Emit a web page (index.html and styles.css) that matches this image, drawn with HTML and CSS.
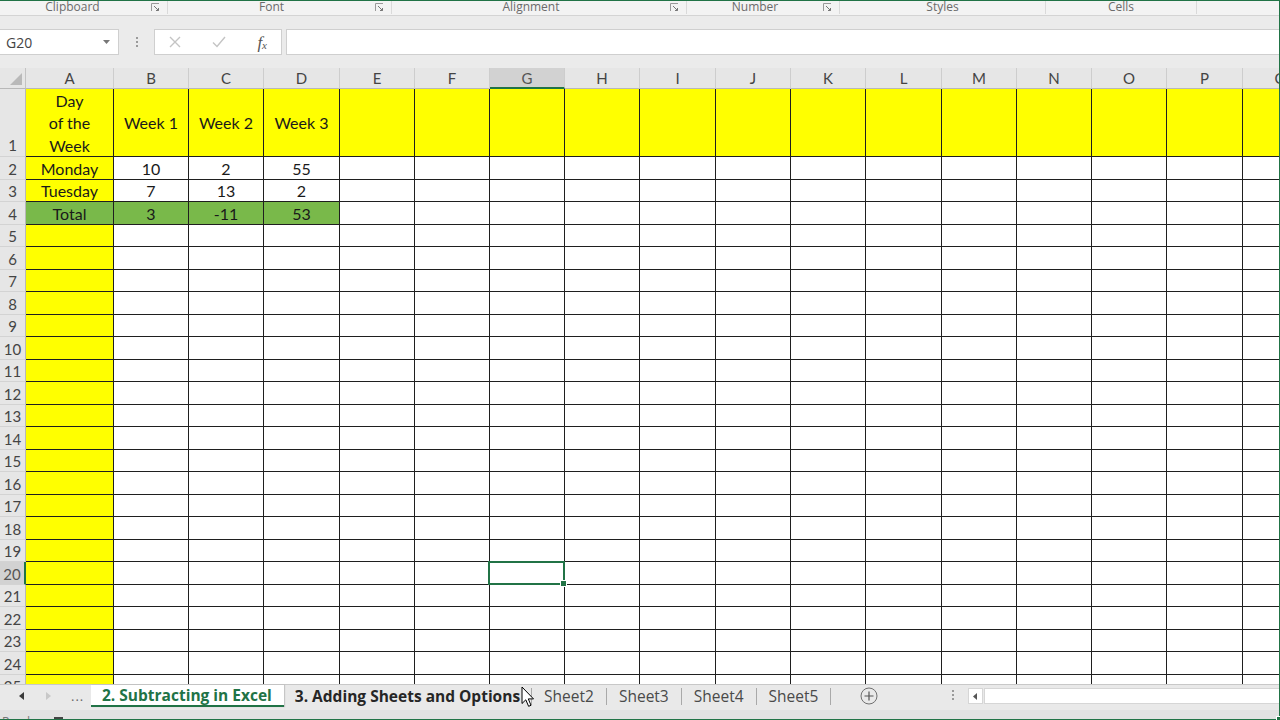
FILE: index.html
```html
<!DOCTYPE html>
<html lang="en">
<head>
    <meta charset="UTF-8">
    <meta name="viewport" content="width=device-width, initial-scale=1.0">
    <title>2. Subtracting in Excel</title>
    <link rel="stylesheet" href="styles.css">
</head>
<body>
    <!-- ribbon group captions -->
    <div class="ribbon">
        <div class="group g-clipboard"><span class="group-label">Clipboard</span><svg class="launcher" width="9" height="9" viewBox="0 0 9 9"><path d="M0.5 8V0.5H8" fill="none" stroke="#9a9a9a"/><path d="M3 3L7.5 7.5M5 7.5H7.5V5" fill="none" stroke="#777"/></svg></div>
        <div class="group g-font"><span class="group-label">Font</span><svg class="launcher" width="9" height="9" viewBox="0 0 9 9"><path d="M0.5 8V0.5H8" fill="none" stroke="#9a9a9a"/><path d="M3 3L7.5 7.5M5 7.5H7.5V5" fill="none" stroke="#777"/></svg></div>
        <div class="group g-alignment"><span class="group-label">Alignment</span><svg class="launcher" width="9" height="9" viewBox="0 0 9 9"><path d="M0.5 8V0.5H8" fill="none" stroke="#9a9a9a"/><path d="M3 3L7.5 7.5M5 7.5H7.5V5" fill="none" stroke="#777"/></svg></div>
        <div class="group g-number"><span class="group-label">Number</span><svg class="launcher" width="9" height="9" viewBox="0 0 9 9"><path d="M0.5 8V0.5H8" fill="none" stroke="#9a9a9a"/><path d="M3 3L7.5 7.5M5 7.5H7.5V5" fill="none" stroke="#777"/></svg></div>
        <div class="group g-styles"><span class="group-label">Styles</span></div>
        <div class="group g-cells"><span class="group-label">Cells</span></div>
        <div class="group g-rest"></div>
    </div>

    <!-- name box + formula bar -->
    <div class="formula-bar">
        <div class="name-box">
            <span>G20</span>
            <svg class="caret" width="7" height="4" viewBox="0 0 7 4"><path d="M0 0H7L3.5 4Z" fill="#777"/></svg>
        </div>
        <div class="grip"><i></i><i></i><i></i></div>
        <div class="fx-buttons">
            <svg width="12" height="12" viewBox="0 0 12 12"><path d="M1 1L11 11M11 1L1 11" stroke="#c4c4c4" stroke-width="1.4"/></svg>
            <svg width="14" height="12" viewBox="0 0 14 12"><path d="M1 6.5L5 10.5L13 1" fill="none" stroke="#c4c4c4" stroke-width="1.4"/></svg>
            <span class="fx">f<sub>x</sub></span>
        </div>
        <div class="formula-input"></div>
    </div>

    <!-- worksheet grid, filled in by the script below -->
    <div class="sheet" id="sheet"></div>

    <!-- sheet tabs -->
    <div class="tabs">
        <div class="tab-nav">
            <svg width="6" height="8" viewBox="0 0 6 8"><path d="M5 0V8L0 4Z" fill="#3a3a3a"/></svg>
            <svg width="6" height="8" viewBox="0 0 6 8"><path d="M1 0V8L6 4Z" fill="#c8c8c8"/></svg>
            <span class="more">...</span>
        </div>
        <div class="tab active">2. Subtracting in Excel</div>
        <div class="tab bold">3. Adding Sheets and Options</div>
        <span class="tab-sep"></span>
        <div class="tab">Sheet2</div>
        <span class="tab-sep"></span>
        <div class="tab">Sheet3</div>
        <span class="tab-sep"></span>
        <div class="tab">Sheet4</div>
        <span class="tab-sep"></span>
        <div class="tab">Sheet5</div>
        <span class="tab-sep"></span>
        <div class="add-sheet">
            <svg width="18" height="18" viewBox="0 0 18 18"><circle cx="9" cy="9" r="8" fill="none" stroke="#707070"/><path d="M9 4.5V13.5M4.5 9H13.5" stroke="#555" stroke-width="1.2"/></svg>
        </div>
        <div class="grip tab-grip"><i></i><i></i><i></i></div>
        <div class="hscroll">
            <div class="scroll-btn"><svg width="4" height="7" viewBox="0 0 4 7"><path d="M4 0V7L0 3.5Z" fill="#555"/></svg></div>
            <div class="scroll-track"></div>
        </div>
    </div>

    <div class="status">
        <span class="status-text">Ready</span>
        <svg class="macro" width="14" height="10" viewBox="0 0 14 10"><rect x="0" y="1" width="9" height="9" fill="#444"/><rect x="10" y="3" width="4" height="7" fill="#444"/></svg>
    </div>

    <!-- mouse pointer resting over the tabs -->
    <svg class="pointer" width="14" height="22" viewBox="0 0 14 22"><path d="M1 1V17.5L4.8 13.8L7.6 20.3L10 19.3L7.3 12.9H12.5Z" fill="#fff" stroke="#000" stroke-width="1" stroke-linejoin="round"/></svg>

    <script>
        const letters = 'ABCDEFGHIJKLMNOPQ'.split('');
        const colWidths = [88, 75, 75, 76, 75, 75, 75, 75, 76, 75, 75, 76, 75, 75, 75, 76, 76];
        const rowCount = 25;
        const active = { col: 'G', row: 20 };

        // values typed into the sheet
        const data = {
            1: ['Day<br>of the<br>Week', 'Week 1', 'Week 2', 'Week 3'],
            2: ['Monday', '10', '2', '55'],
            3: ['Tuesday', '7', '13', '2'],
            4: ['Total', '3', '-11', '53']
        };

        const sheet = document.getElementById('sheet');

        // header row, tall first row, then rows alternating 23/22px
        const rowHeights = [21, 68];
        for (let r = 2; r <= rowCount; r++) {
            rowHeights.push(r % 2 === 0 ? 23 : 22);
        }
        sheet.style.gridTemplateColumns = '26px ' + colWidths.map(w => w + 'px').join(' ');
        sheet.style.gridTemplateRows = rowHeights.map(h => h + 'px').join(' ');

        let html = '<div class="corner"><svg width="12" height="12" viewBox="0 0 12 12"><path d="M12 0V12H0Z" fill="#b9b9b9"/></svg></div>';
        letters.forEach(l => {
            const cls = l === active.col ? 'col-head selected' : 'col-head';
            html += `<div class="${cls}">${l}</div>`;
        });

        for (let r = 1; r <= rowCount; r++) {
            const rowCls = r === active.row ? 'row-head selected' : 'row-head';
            html += `<div class="${rowCls}${r === 1 ? ' tall' : ''}">${r}</div>`;
            letters.forEach((l, c) => {
                let cls = 'cell';
                if (r === 4 && c <= 3) {
                    cls += ' green';
                } else if (r === 1 || c === 0) {
                    cls += ' yellow';
                }
                if (r === active.row && l === active.col) cls += ' active';
                const value = (data[r] && data[r][c]) || '';
                html += `<div class="${cls}">${value}</div>`;
            });
        }

        sheet.innerHTML = html;
    </script>
</body>
</html>
```

FILE: styles.css
```css
* {
    box-sizing: border-box;
}
html, body {
    margin: 0;
    padding: 0;
}
body {
    width: 1280px;
    height: 720px;
    overflow: hidden;
    position: relative;
    background-color: #ebebeb;
    font-family: "Open Sans", "Liberation Sans", sans-serif;
}

/* ribbon captions */
.ribbon {
    display: flex;
    height: 16px;
    background-color: #f3f3f3;
    border-bottom: 1px solid #d4d4d4;
}
.group {
    display: flex;
    align-items: center;
    height: 14px;
    border-right: 1px solid #dadada;
}
.group-label {
    flex: 1;
    text-align: center;
    font-size: 12px;
    line-height: 14px;
    color: #6b6b6b;
}
.launcher {
    margin-right: 7px;
}
.g-clipboard { width: 168px; }
.g-clipboard .group-label { padding-right: 6px; }
.g-font { width: 224px; }
.g-alignment { width: 295px; }
.g-number { width: 153px; }
.g-styles { width: 206px; }
.g-cells { width: 151px; }
.g-rest { flex: 1; border-right: none; }

/* formula bar */
.formula-bar {
    display: flex;
    align-items: center;
    height: 52px;
    background-color: #ebebeb;
}
.name-box {
    width: 119px;
    height: 26px;
    display: flex;
    align-items: center;
    justify-content: space-between;
    padding: 0 8px 0 6px;
    background-color: white;
    border: 1px solid #cfcfcf;
    border-left: none;
    font-size: 14px;
    color: #444;
}
.grip {
    width: 35px;
    display: flex;
    flex-direction: column;
    align-items: center;
    gap: 2px;
}
.grip i {
    width: 2px;
    height: 2px;
    background-color: #9a9a9a;
}
.fx-buttons {
    width: 128px;
    height: 26px;
    display: flex;
    align-items: center;
    justify-content: space-between;
    padding: 0 14px 0 14px;
    background-color: white;
    border: 1px solid #cfcfcf;
}
.fx {
    font-family: "Liberation Serif", serif;
    font-style: italic;
    font-size: 17px;
    color: #555;
    line-height: 1;
}
.fx sub {
    font-size: 11px;
    vertical-align: -1px;
}
.formula-input {
    flex: 1;
    height: 26px;
    margin-left: 4px;
    background-color: white;
    border: 1px solid #cfcfcf;
    border-right: none;
}

/* worksheet */
.sheet {
    display: grid;
    height: 616px;
    overflow: hidden;
    background-color: white;
}
.corner {
    display: flex;
    align-items: flex-end;
    justify-content: flex-end;
    padding: 0 3px 3px 0;
    background-color: #e6e6e6;
    border-right: 1px solid #c3c3c3;
    border-bottom: 1px solid #b8b8b8;
}
.col-head {
    display: flex;
    align-items: center;
    justify-content: center;
    background-color: #e6e6e6;
    border-right: 1px solid #cdcdcd;
    border-bottom: 1px solid #b8b8b8;
    font-family: "Lato", "Liberation Sans", sans-serif;
    font-size: 15px;
    color: #444;
}
.col-head.selected {
    background-color: #d2d2d2;
    border-bottom: 2px solid #217346;
    color: #555;
}
.row-head {
    display: flex;
    align-items: center;
    justify-content: center;
    padding-top: 1px;
    background-color: #e6e6e6;
    border-right: 1px solid #b8b8b8;
    border-bottom: 1px solid #d3d3d3;
    font-family: "Lato", "Liberation Sans", sans-serif;
    font-size: 15px;
    color: #444;
}
.row-head.tall {
    align-items: flex-end;
    padding-bottom: 2px;
}
.row-head.selected {
    background-color: #d2d2d2;
    border-right: 2px solid #217346;
    color: #555;
}
.cell {
    position: relative;
    display: flex;
    align-items: center;
    justify-content: center;
    text-align: center;
    padding-top: 2px;
    border-right: 1px solid #1f1f1f;
    border-bottom: 1px solid #1f1f1f;
    font-family: "Lato", "Liberation Sans", sans-serif;
    font-size: 16px;
    line-height: 22.5px;
    color: #1a1a1a;
}
.yellow {
    background-color: #ffff00;
}
.green {
    background-color: #79b94a;
}
.active::after {
    content: "";
    position: absolute;
    left: -2px;
    top: -1px;
    right: -1px;
    bottom: -1px;
    border: 2px solid #217346;
}
.active::before {
    content: "";
    position: absolute;
    right: -3px;
    bottom: -3px;
    width: 5px;
    height: 5px;
    background-color: #217346;
    border: 1px solid white;
    z-index: 1;
}

/* sheet tabs */
.tabs {
    display: flex;
    align-items: flex-start;
    height: 26px;
    background-color: #e9e9e9;
    border-top: 1px solid #c8c8c8;
    font-size: 15.5px;
}
.tab-nav {
    width: 91px;
    height: 22px;
    display: flex;
    align-items: center;
    padding-left: 19px;
}
.tab-nav svg + svg {
    margin-left: 20px;
}
.tab-nav .more {
    margin-left: 20px;
    font-size: 13px;
    color: #666;
    letter-spacing: 1px;
}
.tab {
    height: 22px;
    display: flex;
    align-items: center;
    padding: 0 12px;
    color: #4a4a4a;
    white-space: nowrap;
}
.tab.active {
    padding: 0 12px 0 11px;
    background-color: white;
    border-bottom: 2px solid #217346;
    box-shadow: 1px 0 1px rgba(0,0,0,0.15);
    color: #217346;
    font-weight: bold;
}
.tab.bold {
    padding: 0 11px;
    color: #262626;
    font-weight: bold;
}
.tab-sep {
    width: 1px;
    height: 17px;
    margin-top: 3px;
    background-color: #a9a9a9;
}
.add-sheet {
    display: flex;
    margin-top: 2px;
    margin-left: 29px;
}
.tab-grip {
    width: auto;
    margin-top: 5px;
    margin-left: 74px;
}
.hscroll {
    display: flex;
    height: 16px;
    margin-top: 3px;
    margin-left: 14px;
    flex: 1;
}
.scroll-btn {
    width: 15px;
    display: flex;
    align-items: center;
    justify-content: flex-start;
    padding-left: 4px;
    background-color: white;
    border: 1px solid #d6d6d6;
}
.scroll-track {
    flex: 1;
    margin-left: 1px;
    background-color: white;
    border: 1px solid #d6d6d6;
    border-right: none;
}

/* status bar */
.status {
    display: flex;
    height: 10px;
    overflow: hidden;
    padding-top: 6px;
    background-color: #e2e2e2;
}
.status-text {
    font-size: 12px;
    line-height: 12px;
    color: #777;
    padding-left: 2px;
}
.macro {
    margin-left: 18px;
}

/* mouse pointer */
.pointer {
    position: absolute;
    left: 521px;
    top: 686px;
}
```
